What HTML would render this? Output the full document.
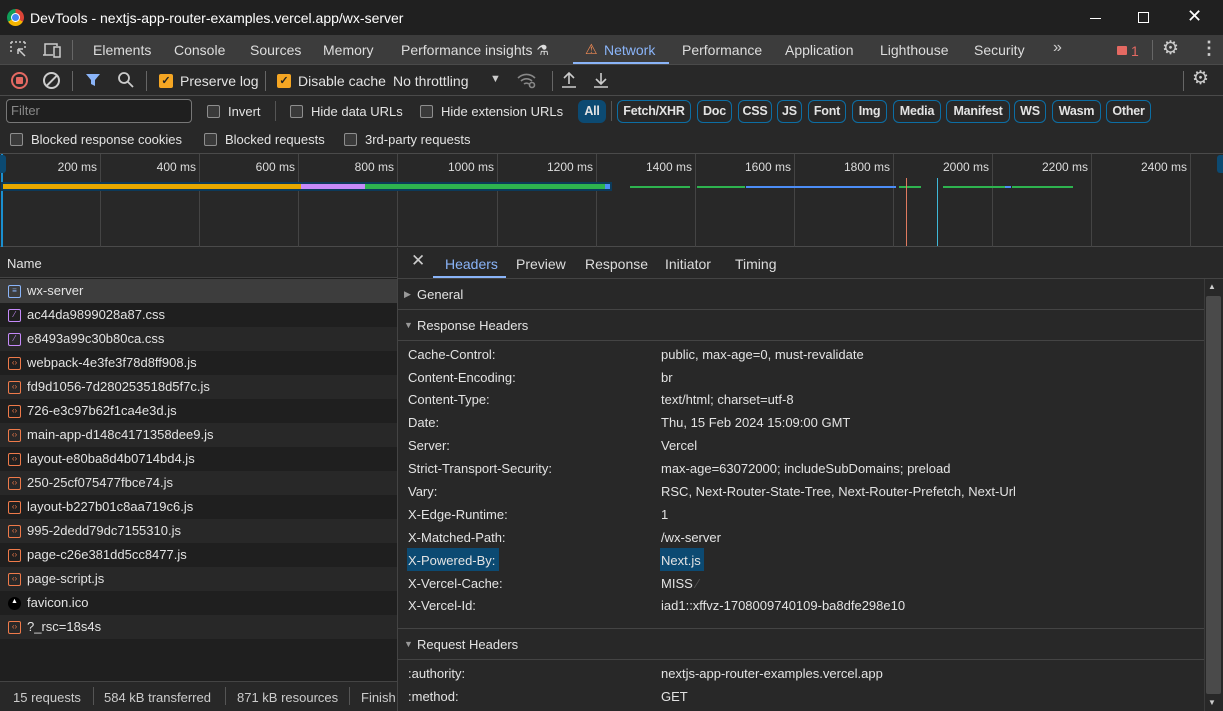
<!DOCTYPE html><html><head><style>
*{margin:0;padding:0;box-sizing:border-box}
body{width:1223px;height:711px;overflow:hidden;background:#282828;font-family:"Liberation Sans",sans-serif;color:#e3e3e3;font-size:13px;position:relative}
.a{position:absolute;white-space:nowrap}
.cb{position:absolute;width:13px;height:13px;border:1px solid #8e8e8e;border-radius:2px;background:#3a3a3a}
.cbo{position:absolute;width:14px;height:14px;border-radius:2px;background:#f5a623;color:#222;font-size:11px;line-height:14px;text-align:center;font-weight:bold}
.pill{position:absolute;top:100px;height:23px;border:1px solid #0c6ea4;border-radius:6px;font-size:12.5px;font-weight:bold;line-height:21px;text-align:center;color:#e3e3e3;letter-spacing:-0.2px}
.tick{position:absolute;top:154px;width:1px;height:93px;background:#444}
.tl{position:absolute;top:160px;font-size:12px;color:#ddd;text-align:right;width:60px}
.row{position:absolute;left:0;width:397px;height:24px;line-height:24px;padding-left:27px;font-size:13px}
.ic{position:absolute;left:8px;top:6px;width:13px;height:13px;border:1px solid #ee7a4a;border-radius:2px;font-size:8px;line-height:10px;text-align:center;color:#ee7a4a}
.k{position:absolute;left:408px;font-size:13px}
.v{position:absolute;left:661px;font-size:13px}
</style></head><body>
<div class="a" style="left:0;top:0;width:1223px;height:35px;background:#202020"></div>
<div class="a" style="left:7px;top:9px;width:17px;height:17px;border-radius:50%;background:conic-gradient(#db4437 0 120deg,#f4b400 120deg 240deg,#0f9d58 240deg 360deg)"><div style="position:absolute;left:4px;top:4px;width:9px;height:9px;border-radius:50%;background:#4285f4;border:1.5px solid #fff"></div></div>
<div class="a" style="left:30px;top:10px;font-size:14px;color:#fff">DevTools - nextjs-app-router-examples.vercel.app/wx-server</div>
<div class="a" style="left:1090px;top:18px;width:11px;height:1px;background:#fff"></div>
<div class="a" style="left:1138px;top:12px;width:11px;height:11px;border:1px solid #fff"></div>
<div class="a" style="left:1187px;top:6px;font-size:18px;color:#fff">✕</div>
<div class="a" style="left:0;top:35px;width:1223px;height:30px;background:#3c3c3c;border-bottom:1px solid #4a4a4a"></div>
<svg class="a" style="left:10px;top:41px" width="18" height="18" viewBox="0 0 18 18" fill="none" stroke="#ccc" stroke-width="1.5"><path d="M1 1h2M5 1h2M9 1h2M13 1h2M1 1v2M1 5v2M1 9v2M15 1v2M15 5v2M8 8l7 7M8 8v5M8 8h5"/></svg>
<svg class="a" style="left:42px;top:41px" width="20" height="18" viewBox="0 0 20 18" fill="none" stroke="#ccc" stroke-width="1.5"><path d="M3 14V3h12v2M1 14h10M12 6h6v10h-6z"/></svg>
<div class="a" style="left:72px;top:40px;width:1px;height:20px;background:#666"></div>
<div class="a" style="left:93px;top:42px;font-size:14px;color:#ddd">Elements</div>
<div class="a" style="left:174px;top:42px;font-size:14px;color:#ddd">Console</div>
<div class="a" style="left:250px;top:42px;font-size:14px;color:#ddd">Sources</div>
<div class="a" style="left:323px;top:42px;font-size:14px;color:#ddd">Memory</div>
<div class="a" style="left:401px;top:42px;font-size:14px;color:#ddd">Performance insights ⚗</div>
<div class="a" style="left:585px;top:41px;font-size:14px;color:#f28b54">⚠</div>
<div class="a" style="left:604px;top:42px;font-size:14px;color:#8ab4f8">Network</div>
<div class="a" style="left:573px;top:62px;width:96px;height:2px;background:#8ab4f8"></div>
<div class="a" style="left:682px;top:42px;font-size:14px;color:#ddd">Performance</div>
<div class="a" style="left:785px;top:42px;font-size:14px;color:#ddd">Application</div>
<div class="a" style="left:880px;top:42px;font-size:14px;color:#ddd">Lighthouse</div>
<div class="a" style="left:974px;top:42px;font-size:14px;color:#ddd">Security</div>
<div class="a" style="left:1053px;top:39px;font-size:16px;color:#ccc">»</div>
<div class="a" style="left:1117px;top:46px;width:10px;height:9px;background:#e46962;border-radius:1px"></div>
<div class="a" style="left:1131px;top:43px;font-size:14px;color:#e46962">1</div>
<div class="a" style="left:1152px;top:40px;width:1px;height:20px;background:#666"></div>
<div class="a" style="left:1162px;top:37px;font-size:19px;color:#ccc">⚙</div>
<div class="a" style="left:1200px;top:38px;font-size:18px;color:#ccc;font-weight:bold">⋮</div>
<div class="a" style="left:0;top:66px;width:1223px;height:30px;background:#282828;border-bottom:1px solid #4a4a4a"></div>
<div class="a" style="left:11px;top:72px;width:17px;height:17px;border-radius:50%;border:2px solid #e46962"><div style="position:absolute;left:3px;top:3px;width:7px;height:7px;background:#e46962;border-radius:1px"></div></div>
<div class="a" style="left:43px;top:72px;width:17px;height:17px;border-radius:50%;border:2px solid #ccc"></div>
<div class="a" style="left:44px;top:80px;width:15px;height:2px;background:#ccc;transform:rotate(-45deg)"></div>
<div class="a" style="left:72px;top:71px;width:1px;height:20px;background:#666"></div>
<svg class="a" style="left:85px;top:72px" width="16" height="16"><path d="M1 2h14l-5 6v6l-4-2v-4z" fill="#8ab4f8"/></svg>
<svg class="a" style="left:117px;top:71px" width="18" height="18" fill="none" stroke="#ccc" stroke-width="1.8"><circle cx="7" cy="7" r="5"/><path d="M11 11l5 5"/></svg>
<div class="a" style="left:146px;top:71px;width:1px;height:20px;background:#666"></div>
<div class="cbo" style="left:159px;top:74px">✓</div>
<div class="a" style="left:180px;top:73px;font-size:14px">Preserve log</div>
<div class="a" style="left:265px;top:71px;width:1px;height:20px;background:#666"></div>
<div class="cbo" style="left:277px;top:74px">✓</div>
<div class="a" style="left:298px;top:73px;font-size:14px">Disable cache</div>
<div class="a" style="left:393px;top:73px;font-size:14px">No throttling</div>
<div class="a" style="left:490px;top:73px;font-size:11px;color:#ccc">▼</div>
<svg class="a" style="left:516px;top:71px" width="22" height="18" fill="none" stroke="#888" stroke-width="1.6"><path d="M2 7a12 12 0 0 1 17 0M5 10a8 8 0 0 1 11 0M8 13a4 4 0 0 1 5 0"/><circle cx="16" cy="14" r="2.5"/></svg>
<div class="a" style="left:552px;top:71px;width:1px;height:20px;background:#666"></div>
<svg class="a" style="left:561px;top:71px" width="16" height="18" fill="none" stroke="#ccc" stroke-width="1.6"><path d="M8 13V2M3 7l5-5 5 5M1 16h14"/></svg>
<svg class="a" style="left:593px;top:71px" width="16" height="18" fill="none" stroke="#ccc" stroke-width="1.6"><path d="M8 2v11M3 8l5 5 5-5M1 16h14"/></svg>
<div class="a" style="left:1183px;top:71px;width:1px;height:20px;background:#666"></div>
<div class="a" style="left:1192px;top:67px;font-size:19px;color:#ccc">⚙</div>
<div class="a" style="left:6px;top:99px;width:186px;height:24px;border:1px solid #777;border-radius:4px;background:#1f1f1f;color:#888;padding:3px 4px;font-size:13px">Filter</div>
<div class="cb" style="left:207px;top:105px"></div><div class="a" style="left:228px;top:104px">Invert</div>
<div class="a" style="left:275px;top:101px;width:1px;height:20px;background:#555"></div>
<div class="cb" style="left:290px;top:105px"></div><div class="a" style="left:311px;top:104px">Hide data URLs</div>
<div class="cb" style="left:420px;top:105px"></div><div class="a" style="left:441px;top:104px">Hide extension URLs</div>
<div class="pill" style="left:578px;background:#0c4a72;border-color:#0c4a72;width:28px">All</div>
<div class="a" style="left:611px;top:101px;width:1px;height:20px;background:#555"></div>
<div class="pill" style="left:617px;width:74px">Fetch/XHR</div>
<div class="pill" style="left:697px;width:35px">Doc</div>
<div class="pill" style="left:738px;width:34px">CSS</div>
<div class="pill" style="left:777px;width:25px">JS</div>
<div class="pill" style="left:808px;width:38px">Font</div>
<div class="pill" style="left:852px;width:35px">Img</div>
<div class="pill" style="left:893px;width:48px">Media</div>
<div class="pill" style="left:946px;width:64px">Manifest</div>
<div class="pill" style="left:1014px;width:32px">WS</div>
<div class="pill" style="left:1052px;width:49px">Wasm</div>
<div class="pill" style="left:1106px;width:45px">Other</div>
<div class="cb" style="left:10px;top:133px"></div><div class="a" style="left:31px;top:132px">Blocked response cookies</div>
<div class="cb" style="left:204px;top:133px"></div><div class="a" style="left:225px;top:132px">Blocked requests</div>
<div class="cb" style="left:344px;top:133px"></div><div class="a" style="left:365px;top:132px">3rd-party requests</div>
<div class="a" style="left:0;top:153px;width:1223px;height:94px;background:#282828;border-top:1px solid #4a4a4a;border-bottom:1px solid #4a4a4a"></div>
<div class="tick" style="left:100px"></div><div class="tick" style="left:199px"></div><div class="tick" style="left:298px"></div><div class="tick" style="left:397px"></div><div class="tick" style="left:497px"></div><div class="tick" style="left:596px"></div><div class="tick" style="left:695px"></div><div class="tick" style="left:794px"></div><div class="tick" style="left:893px"></div><div class="tick" style="left:992px"></div><div class="tick" style="left:1091px"></div><div class="tick" style="left:1190px"></div>
<div class="tl" style="left:37px">200 ms</div><div class="tl" style="left:136px">400 ms</div><div class="tl" style="left:235px">600 ms</div><div class="tl" style="left:334px">800 ms</div><div class="tl" style="left:434px">1000 ms</div><div class="tl" style="left:533px">1200 ms</div><div class="tl" style="left:632px">1400 ms</div><div class="tl" style="left:731px">1600 ms</div><div class="tl" style="left:830px">1800 ms</div><div class="tl" style="left:929px">2000 ms</div><div class="tl" style="left:1028px">2200 ms</div><div class="tl" style="left:1127px">2400 ms</div>
<div class="a" style="left:1px;top:154px;width:2px;height:93px;background:#1a8fd0"></div>
<div class="a" style="left:0;top:155px;width:6px;height:18px;background:#0c4a72;border-radius:0 3px 3px 0"></div>
<div class="a" style="left:1217px;top:155px;width:6px;height:18px;background:#0c4a72;border-radius:3px 0 0 3px"></div>
<div class="a" style="left:1px;top:182px;width:611px;height:9px;background:#0c3a5a"></div>
<div class="a" style="left:3px;top:184px;width:298px;height:5px;background:#e5a800"></div>
<div class="a" style="left:301px;top:184px;width:64px;height:5px;background:#c58af9"></div>
<div class="a" style="left:365px;top:184px;width:240px;height:5px;background:#2eb34f"></div>
<div class="a" style="left:605px;top:184px;width:5px;height:5px;background:#4c8df6"></div>
<div class="a" style="left:630px;top:186px;width:60px;height:2px;background:#2eb34f"></div>
<div class="a" style="left:697px;top:186px;width:48px;height:2px;background:#2eb34f"></div>
<div class="a" style="left:746px;top:186px;width:150px;height:2px;background:#4c8df6"></div>
<div class="a" style="left:899px;top:186px;width:22px;height:2px;background:#2eb34f"></div>
<div class="a" style="left:943px;top:186px;width:62px;height:2px;background:#2eb34f"></div>
<div class="a" style="left:1005px;top:186px;width:6px;height:2px;background:#4c8df6"></div>
<div class="a" style="left:1012px;top:186px;width:61px;height:2px;background:#2eb34f"></div>
<div class="a" style="left:906px;top:178px;width:1px;height:68px;background:#e07a5f"></div>
<div class="a" style="left:937px;top:178px;width:1px;height:68px;background:#3fb8d8"></div>
<div class="a" style="left:0;top:248px;width:398px;height:463px;background:#1f1f1f"></div>
<div class="a" style="left:0;top:248px;width:397px;height:30px;background:#282828;border-bottom:1px solid #444"></div>
<div class="a" style="left:7px;top:256px;font-size:13px">Name</div>
<div class="row" style="top:279px;background:#3d3d3d"><div class="ic" style="border-color:#8ab4f8;color:#8ab4f8">≡</div>wx-server</div>
<div class="row" style="top:303px;background:#1f1f1f"><div class="ic" style="border-color:#c58af9;color:#c58af9">⁄</div>ac44da9899028a87.css</div>
<div class="row" style="top:327px;background:#282828"><div class="ic" style="border-color:#c58af9;color:#c58af9">⁄</div>e8493a99c30b80ca.css</div>
<div class="row" style="top:351px;background:#1f1f1f"><div class="ic">‹›</div>webpack-4e3fe3f78d8ff908.js</div>
<div class="row" style="top:375px;background:#282828"><div class="ic">‹›</div>fd9d1056-7d280253518d5f7c.js</div>
<div class="row" style="top:399px;background:#1f1f1f"><div class="ic">‹›</div>726-e3c97b62f1ca4e3d.js</div>
<div class="row" style="top:423px;background:#282828"><div class="ic">‹›</div>main-app-d148c4171358dee9.js</div>
<div class="row" style="top:447px;background:#1f1f1f"><div class="ic">‹›</div>layout-e80ba8d4b0714bd4.js</div>
<div class="row" style="top:471px;background:#282828"><div class="ic">‹›</div>250-25cf075477fbce74.js</div>
<div class="row" style="top:495px;background:#1f1f1f"><div class="ic">‹›</div>layout-b227b01c8aa719c6.js</div>
<div class="row" style="top:519px;background:#282828"><div class="ic">‹›</div>995-2dedd79dc7155310.js</div>
<div class="row" style="top:543px;background:#1f1f1f"><div class="ic">‹›</div>page-c26e381dd5cc8477.js</div>
<div class="row" style="top:567px;background:#282828"><div class="ic">‹›</div>page-script.js</div>
<div class="row" style="top:591px;background:#1f1f1f"><div class="ic" style="border:none;background:#000;border-radius:50%;color:#fff;font-size:7px">▲</div>favicon.ico</div>
<div class="row" style="top:615px;background:#282828"><div class="ic">‹›</div>?_rsc=18s4s</div>
<div class="a" style="left:0;top:681px;width:398px;height:30px;background:#282828;border-top:1px solid #444"></div>
<div class="a" style="left:13px;top:690px;color:#ccc">15 requests</div>
<div class="a" style="left:93px;top:687px;width:1px;height:18px;background:#555"></div>
<div class="a" style="left:104px;top:690px;color:#ccc">584 kB transferred</div>
<div class="a" style="left:225px;top:687px;width:1px;height:18px;background:#555"></div>
<div class="a" style="left:237px;top:690px;color:#ccc">871 kB resources</div>
<div class="a" style="left:349px;top:687px;width:1px;height:18px;background:#555"></div>
<div class="a" style="left:361px;top:690px;color:#ccc">Finish</div>
<div class="a" style="left:397px;top:248px;width:1px;height:463px;background:#444"></div>
<div class="a" style="left:398px;top:248px;width:825px;height:31px;background:#282828;border-bottom:1px solid #444"></div>
<div class="a" style="left:411px;top:251px;font-size:17px;color:#ccc">✕</div>
<div class="a" style="left:445px;top:256px;font-size:14px;color:#8ab4f8">Headers</div>
<div class="a" style="left:433px;top:276px;width:73px;height:2px;background:#8ab4f8"></div>
<div class="a" style="left:516px;top:256px;font-size:14px;color:#ddd">Preview</div>
<div class="a" style="left:585px;top:256px;font-size:14px;color:#ddd">Response</div>
<div class="a" style="left:665px;top:256px;font-size:14px;color:#ddd">Initiator</div>
<div class="a" style="left:735px;top:256px;font-size:14px;color:#ddd">Timing</div>
<div class="a" style="left:398px;top:309px;width:806px;height:1px;background:#444"></div>
<div class="a" style="left:404px;top:289px;font-size:9px;color:#999">▶</div>
<div class="a" style="left:417px;top:287px">General</div>
<div class="a" style="left:398px;top:340px;width:806px;height:1px;background:#444"></div>
<div class="a" style="left:404px;top:320px;font-size:9px;color:#999">▼</div>
<div class="a" style="left:417px;top:318px">Response Headers</div>
<div class="k" style="top:347px">Cache-Control:</div><div class="v" style="top:347px">public, max-age=0, must-revalidate</div>
<div class="k" style="top:370px">Content-Encoding:</div><div class="v" style="top:370px">br</div>
<div class="k" style="top:392px">Content-Type:</div><div class="v" style="top:392px">text/html; charset=utf-8</div>
<div class="k" style="top:415px">Date:</div><div class="v" style="top:415px">Thu, 15 Feb 2024 15:09:00 GMT</div>
<div class="k" style="top:438px">Server:</div><div class="v" style="top:438px">Vercel</div>
<div class="k" style="top:461px">Strict-Transport-Security:</div><div class="v" style="top:461px">max-age=63072000; includeSubDomains; preload</div>
<div class="k" style="top:484px">Vary:</div><div class="v" style="top:484px">RSC, Next-Router-State-Tree, Next-Router-Prefetch, Next-Url</div>
<div class="k" style="top:507px">X-Edge-Runtime:</div><div class="v" style="top:507px">1</div>
<div class="k" style="top:530px">X-Matched-Path:</div><div class="v" style="top:530px">/wx-server</div>
<div class="a" style="left:407px;top:548px;width:92px;height:23px;background:#0c4a72"></div>
<div class="a" style="left:660px;top:548px;width:44px;height:23px;background:#0c4a72"></div>
<div class="k" style="top:553px">X-Powered-By:</div><div class="v" style="top:553px">Next.js</div>
<div class="k" style="top:576px">X-Vercel-Cache:</div><div class="v" style="top:576px">MISS <span style="color:#555">⁄</span></div>
<div class="k" style="top:598px">X-Vercel-Id:</div><div class="v" style="top:598px">iad1::xffvz-1708009740109-ba8dfe298e10</div>
<div class="a" style="left:398px;top:628px;width:806px;height:1px;background:#444"></div>
<div class="a" style="left:404px;top:639px;font-size:9px;color:#999">▼</div>
<div class="a" style="left:417px;top:637px">Request Headers</div>
<div class="a" style="left:398px;top:659px;width:806px;height:1px;background:#444"></div>
<div class="k" style="top:666px">:authority:</div><div class="v" style="top:666px">nextjs-app-router-examples.vercel.app</div>
<div class="k" style="top:689px">:method:</div><div class="v" style="top:689px">GET</div>
<div class="a" style="left:1204px;top:279px;width:19px;height:432px;background:#282828;border-left:1px solid #3a3a3a"></div>
<div class="a" style="left:1206px;top:296px;width:15px;height:398px;background:#4a4a4a;border-radius:2px"></div>
<div class="a" style="left:1208px;top:282px;font-size:8px;color:#ccc">▲</div>
<div class="a" style="left:1208px;top:698px;font-size:8px;color:#ccc">▼</div>
</body></html>
